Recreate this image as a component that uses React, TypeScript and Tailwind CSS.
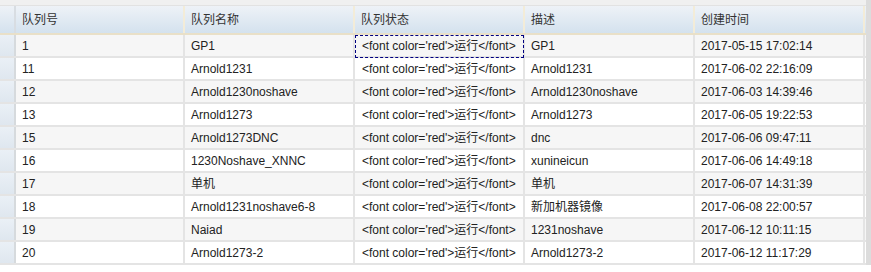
import React from "react";

type Row = { id: string; name: string; desc: string; time: string };

const rows: Row[] = [
  { id: "1", name: "GP1", desc: "GP1", time: "2017-05-15 17:02:14" },
  { id: "11", name: "Arnold1231", desc: "Arnold1231", time: "2017-06-02 22:16:09" },
  { id: "12", name: "Arnold1230noshave", desc: "Arnold1230noshave", time: "2017-06-03 14:39:46" },
  { id: "13", name: "Arnold1273", desc: "Arnold1273", time: "2017-06-05 19:22:53" },
  { id: "15", name: "Arnold1273DNC", desc: "dnc", time: "2017-06-06 09:47:11" },
  { id: "16", name: "1230Noshave_XNNC", desc: "xunineicun", time: "2017-06-06 14:49:18" },
  { id: "17", name: "单机", desc: "单机", time: "2017-06-07 14:31:39" },
  { id: "18", name: "Arnold1231noshave6-8", desc: "新加机器镜像", time: "2017-06-08 22:00:57" },
  { id: "19", name: "Naiad", desc: "1231noshave", time: "2017-06-12 10:11:15" },
  { id: "20", name: "Arnold1273-2", desc: "Arnold1273-2", time: "2017-06-12 11:17:29" },
];

const headers = ["队列号", "队列名称", "队列状态", "描述", "创建时间"];
const widths = ["w-[169px]", "w-[170px]", "w-[170px]", "w-[170px]", "w-[170px]"];

const App: React.FC = () => {
  return (
    <div
      className="w-[871px] h-[272px] bg-white text-[12px] text-[#222] overflow-hidden"
      style={{ fontFamily: '"Liberation Sans", Arial, "Noto Sans CJK SC", sans-serif' }}
    >
      <div className="flex h-full">
        <div className="w-[866px] flex flex-col">
          {/* top strip */}
          <div className="h-[6px] bg-[#f0f0f0] border-b border-[#e2e2e2]" />

          {/* header */}
          <div className="flex h-[29px] bg-gradient-to-b from-[#eef2f7] to-[#d4e2ee] border-b-2 border-[#e9e0c8]">
            <div className="w-[16px] border-r-2 border-[#d8dde2]" />
            {headers.map((h, i) => (
              <div
                key={h}
                className={`${widths[i]} flex items-center pl-[6px] text-[#333] border-r-2 border-[#f3ecd8]`}
              >
                {h}
              </div>
            ))}
          </div>

          {/* body */}
          {rows.map((r, idx) => (
            <div
              key={r.id}
              className={`flex h-[23px] border-b-2 border-[#e4e4e4] ${idx % 2 === 0 ? "bg-[#f6f6f6]" : "bg-white"}`}
            >
              <div className="w-[16px] bg-gradient-to-b from-[#eaf0f6] to-[#dfe7ef] border-r-2 border-[#d6dadd]" />
              <div className={`${widths[0]} flex items-center pl-[6px] border-r-2 border-[#e4e4e4]`}>{r.id}</div>
              <div className={`${widths[1]} flex items-center pl-[6px] border-r-2 border-[#e4e4e4]`}>{r.name}</div>
              <div className={`${widths[2]} flex items-start border-r-2 border-[#e4e4e4]`}>
                <div
                  className={`flex items-center shrink-0 w-[169px] h-[23px] pl-[6px] pb-[2px] ${idx === 0 ? "border border-dashed border-[#000080]" : "border border-transparent"}`}
                >
                  {"<font color='red'>运行</font>"}
                </div>
              </div>
              <div className={`${widths[3]} flex items-center pl-[6px] border-r-2 border-[#e4e4e4]`}>{r.desc}</div>
              <div className={`${widths[4]} flex items-center pl-[6px] border-r-2 border-[#e4e4e4]`}>{r.time}</div>
            </div>
          ))}
          <div className="flex-1 bg-white" />
        </div>
        {/* scrollbar edge */}
        <div className="w-[5px] h-[265px] bg-[#dcdcdc]" />
      </div>
    </div>
  );
};

export default App;
